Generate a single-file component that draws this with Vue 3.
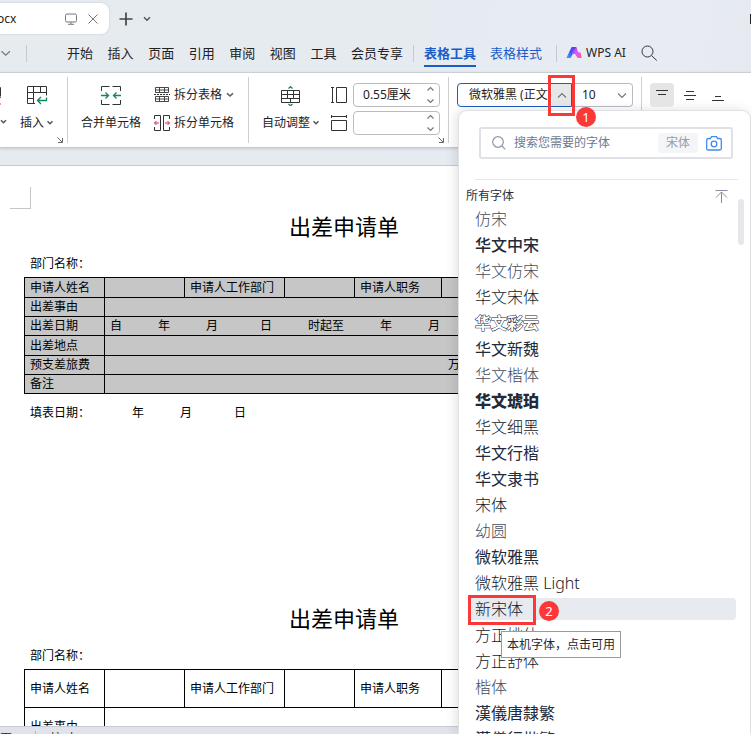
<script setup>
import { ref } from 'vue'

const menus = ['开始', '插入', '页面', '引用', '审阅', '视图', '工具', '会员专享']
const search = ref('')
const fontName = ref('微软雅黑 (正文)')
const fontSize = ref('10')
const rowHeight = ref('0.55厘米')
const colWidth = ref('')
const selected = ref('新宋体')

const fonts = [
  { name: '仿宋', look: 'thin' },
  { name: '华文中宋', look: 'medium' },
  { name: '华文仿宋', look: 'thin' },
  { name: '华文宋体', look: 'light' },
  { name: '华文彩云', look: 'outline' },
  { name: '华文新魏', look: 'brush' },
  { name: '华文楷体', look: 'thin' },
  { name: '华文琥珀', look: 'heavy' },
  { name: '华文细黑', look: 'light' },
  { name: '华文行楷', look: 'brush' },
  { name: '华文隶书', look: 'brush' },
  { name: '宋体', look: 'light' },
  { name: '幼圆', look: 'thin' },
  { name: '微软雅黑', look: 'regular' },
  { name: '微软雅黑 Light', look: 'light' },
  { name: '新宋体', look: 'light' },
  { name: '方正姚体', look: 'light' },
  { name: '方正舒体', look: 'light' },
  { name: '楷体', look: 'thin' },
  { name: '漢儀唐隸繁', look: 'brush' },
  { name: '漢儀行楷繁', look: 'brush' }
]
</script>

<template>
  <div class="app">
    <header class="titlebar">
      <div class="doc-tab">
        <span class="doc-name">ocx</span>
        <svg class="tab-icon" width="12" height="12" viewBox="0 0 12 12"><rect x="0.5" y="1" width="11" height="8" rx="1.5" /><path d="M6 9v2M3 11.3h6" /></svg>
        <button class="plain" aria-label="关闭">
          <svg class="tab-icon" width="10" height="12" viewBox="0 0 10 12"><path d="M0.5 1.5l9 9M9.5 1.5l-9 9" /></svg>
        </button>
      </div>
      <button class="plain" aria-label="新建"><svg class="plus" width="14" height="14" viewBox="0 0 14 14"><path d="M7 0.5v13M0.5 7h13" /></svg></button>
      <button class="plain" aria-label="标签列表"><svg class="chev bold" width="8" height="6" viewBox="0 0 8 6"><path d="M1 1.2l3 3 3-3" /></svg></button>
      <span class="window-edge"></span>
    </header>

    <nav class="menubar">
      <button class="plain first" aria-label="更多"><svg class="chev" width="11" height="7" viewBox="0 0 11 7"><path d="M1.5 1.2l4.2 4 4.2-4" /></svg></button>
      <i class="bar"></i>
      <div class="menus">
        <a v-for="m in menus" :key="m" href="#">{{ m }}</a>
      </div>
      <i class="bar"></i>
      <a href="#" class="active">表格工具</a>
      <a href="#" class="blue">表格样式</a>
      <i class="bar"></i>
      <a href="#" class="ai">
        <svg width="16" height="14" viewBox="0 0 16 14">
          <defs>
            <linearGradient id="aiLeft" x1="0" y1="1" x2="1" y2="0"><stop offset="0" stop-color="#3aa8ff" /><stop offset="0.5" stop-color="#3d55f5" /><stop offset="1" stop-color="#6a35f0" /></linearGradient>
            <linearGradient id="aiRight" x1="0" y1="0" x2="1" y2="1"><stop offset="0" stop-color="#7a3cf2" /><stop offset="0.5" stop-color="#e05af0" /><stop offset="1" stop-color="#ff5a8a" /></linearGradient>
          </defs>
          <path d="M5.6 1h4.8L4.6 12H0.4z" fill="url(#aiLeft)" />
          <path d="M7 5l3.400-4 1.400 4.200q0.500 1.300 1.600 1.300h1.200l1 5.500h-3.800L9.800 9.200q-0.600-1.400-1.800-1.200l-2.400 0.200z" fill="url(#aiRight)" />
        </svg>
        WPS AI
      </a>
      <button class="plain" aria-label="搜索"><svg class="line" width="17" height="17" viewBox="0 0 17 17"><circle cx="6.5" cy="6.5" r="5.5" /><path d="M10.6 10.6l5.2 5" /></svg></button>
    </nav>

    <section class="ribbon">
      <div class="group g-insert">
        <button class="tool cut" aria-label="删除">
          <svg width="6" height="20" viewBox="0 0 6 20"><path d="M-1 1.5h1.5v9" stroke="#333" fill="none" /><path d="M0 11.5h1M0 18h1" stroke="#d23b5d" /></svg>
          <svg class="chev bold" width="7" height="6" viewBox="0 0 7 6"><path d="M1 1.2l2.5 2.5L6 1.2" /></svg>
        </button>
        <button class="tool">
          <svg class="line" width="22" height="20" viewBox="0 0 22 20"><path d="M9 17.500H1.500V0.500h19v9M1.500 6.500h19M1.500 12.500h6M7.500 0.500v17M14.500 0.500v6" /><path class="green" d="M20.500 11.500V14.500H11.500M15 11l-3.500 3.500L15 18" /></svg>
          <span class="cap">插入<svg class="chev bold" width="8" height="6" viewBox="0 0 8 6"><path d="M1.500 1.200L4 3.700l2.500-2.500" /></svg></span>
        </button>
        <svg class="corner" width="6" height="6" viewBox="0 0 6 6"><path d="M0.500 0.500l4.500 4.500M5.500 1v4.500H1" /></svg>
      </div>

      <div class="group g-merge">
        <button class="tool">
          <svg class="line" width="22" height="20" viewBox="0 0 22 20"><path d="M1.500 5V0.500H9.500M1.500 14v4.500H9.500M20.500 5V0.500H12.500M20.500 14v4.500H12.500" /><path class="green" d="M1 9.500h7.500M5.500 6.500l3 3-3 3M21 9.500h-7.500M16.500 6.500l-3 3 3 3" /></svg>
          <span class="cap">合并单元格</span>
        </button>
        <div class="rows">
          <button class="row-tool">
            <svg class="line" width="16" height="16" viewBox="0 0 16 16"><path d="M1.500 5.500V0.500h13V5.500zM5.500 0.500V5.500M10.500 0.500V5.500M1.500 3h13M1.500 9.500V14.500h13V9.500zM5.500 9.500v5M10.500 9.500v5M1.500 12h13" stroke-width="0.900" /><path d="M0 7.500h16" stroke-dasharray="2 1" /></svg>
            拆分表格
            <svg class="chev bold" width="8" height="6" viewBox="0 0 8 6"><path d="M1 1.200l3 2.800 3-2.800" /></svg>
          </button>
          <button class="row-tool">
            <svg class="line" width="16" height="16" viewBox="0 0 16 16"><path d="M0.500 4V0.500h6v15h-6V12M15.500 4V0.500h-6v15h6V12" /><path class="red" d="M5 8H0.500M2.500 6l-2 2 2 2M11 8h4.500M13.500 6l2 2-2 2" /></svg>
            拆分单元格
          </button>
        </div>
      </div>

      <div class="group g-size">
        <button class="tool">
          <svg class="line" width="20" height="20" viewBox="0 0 20 20"><path d="M0.500 4.500h18v12h-18zM0.500 8.500h18M0.500 12.500h18M6.500 4.500v8M12.500 4.500v4M9.500 12.500v4M12.500 8.500v4" /><path class="green" d="M7.500 2.500L9.500 0.700l2 1.800M7.500 18l2 1.800 2-1.800" /></svg>
          <span class="cap">自动调整<svg class="chev bold" width="8" height="6" viewBox="0 0 8 6"><path d="M1.500 1.200L4 3.700l2.500-2.500" /></svg></span>
        </button>
        <div class="sizes">
          <label class="size">
            <svg class="line" width="16" height="16" viewBox="0 0 16 16"><path d="M0 0.500h3M1.500 0.500v15M0 15.500h3M5.500 0.500h10v15h-10z" /></svg>
            <span class="spin"><input v-model="rowHeight" aria-label="行高" /><svg class="chev" width="9" height="18" viewBox="0 0 9 18"><path d="M1.500 4.500l3-3 3 3M1.500 13.500l3 3 3-3" /></svg></span>
          </label>
          <label class="size">
            <svg class="line" width="16" height="16" viewBox="0 0 16 16"><path d="M0.500 0v3M0.500 1.500h15M15.500 0v3M0.500 5.500h15v10h-15z" /></svg>
            <span class="spin"><input v-model="colWidth" aria-label="列宽" /><svg class="chev" width="9" height="18" viewBox="0 0 9 18"><path d="M1.500 4.500l3-3 3 3M1.500 13.500l3 3 3-3" /></svg></span>
          </label>
        </div>
        <svg class="corner" width="6" height="6" viewBox="0 0 6 6"><path d="M0.500 0.500l4.500 4.500M5.500 1v4.500H1" /></svg>
      </div>

      <div class="group g-font">
        <div class="combo">
          <input v-model="fontName" aria-label="字体" />
          <button class="caret" aria-label="收起字体列表"><svg class="chev" width="10" height="7" viewBox="0 0 10 7"><path d="M1 5.500l4-4 4 4" /></svg></button>
          <span class="mark mark-one"></span>
          <span class="badge badge-one">1</span>

          <div class="panel">
            <label class="search">
              <svg width="14" height="14" viewBox="0 0 14 14"><circle cx="6" cy="6" r="5.300" /><path d="M10 10l3.300 3.300" /></svg>
              <input v-model="search" placeholder="搜索您需要的字体" aria-label="搜索字体" />
              <button class="tag">宋体</button>
              <button class="plain" aria-label="拍照识字"><svg class="camera" width="16" height="15" viewBox="0 0 16 15"><path d="M4.500 2.500L5.500 0.700h5l1 1.800h2.300q1.500 0 1.500 1.500v8.500q0 1.500-1.500 1.500H2.200q-1.500 0-1.500-1.500V4q0-1.500 1.500-1.500z" /><circle cx="8" cy="8" r="2.800" /></svg></button>
            </label>
            <div class="panel-head">
              <span>所有字体</span>
              <button class="plain" aria-label="回到顶部"><svg width="13" height="13" viewBox="0 0 13 13"><path d="M0.500 0.500h12M6.500 2v11M1 7.500l5.500-5.500L12 7.500" /></svg></button>
            </div>
            <ul class="fonts">
              <li v-for="f in fonts" :key="f.name" :class="{ on: f.name === selected }">
                <button :class="f.look" @click="selected = f.name">{{ f.name }}</button>
                <template v-if="f.name === selected">
                  <span class="mark mark-two"></span>
                  <span class="badge badge-two">2</span>
                  <span class="tip" role="tooltip">本机字体，点击可用</span>
                </template>
              </li>
            </ul>
            <span class="thumb"></span>
          </div>
        </div>
        <select v-model="fontSize" aria-label="字号"><option>10</option></select>
        <svg class="chev select-chev" width="10" height="7" viewBox="0 0 10 7"><path d="M1 1.500l4 4 4-4" /></svg>
      </div>

      <div class="group g-align">
        <button class="align on" aria-label="顶端对齐"><svg class="line" width="12" height="12" viewBox="0 0 12 12"><path d="M0 1.500h12M2 5.500h8" /></svg></button>
        <button class="align" aria-label="垂直居中"><svg class="line" width="12" height="12" viewBox="0 0 12 12"><path d="M2 2.500h8M0 6.500h12M2 10.500h8" /></svg></button>
        <button class="align" aria-label="底端对齐"><svg class="line" width="12" height="12" viewBox="0 0 12 12"><path d="M3 7.500h6M0 11.500h12" /></svg></button>
      </div>
    </section>

    <main class="doc">
      <div class="page">
        <div class="crop"></div>
        <h1>出差申请单</h1>
        <p>部门名称：</p>
        <table class="shaded">
          <colgroup><col class="c80" /><col class="c80" /><col class="c100" /><col class="c70" /><col class="c87" /><col /></colgroup>
          <tbody>
            <tr class="tall"><td>申请人姓名</td><td></td><td>申请人工作部门</td><td></td><td>申请人职务</td><td></td></tr>
            <tr><td>出差事由</td><td colspan="5"></td></tr>
            <tr><td>出差日期</td><td colspan="5"><div class="dates"><span>自</span><span>年</span><span>月</span><span>日</span><span>时起至</span><span>年</span><span>月</span></div></td></tr>
            <tr class="tall"><td>出差地点</td><td colspan="5"></td></tr>
            <tr><td>预支差旅费</td><td colspan="5" class="money">万</td></tr>
            <tr><td>备注</td><td colspan="5"></td></tr>
          </tbody>
        </table>
        <p class="fill"><span>填表日期：</span><span>年</span><span>月</span><span>日</span></p>
        <h1>出差申请单</h1>
        <p>部门名称：</p>
        <table class="roomy">
          <colgroup><col class="c80" /><col class="c80" /><col class="c100" /><col class="c70" /><col class="c87" /><col /></colgroup>
          <tbody>
            <tr><td>申请人姓名</td><td></td><td>申请人工作部门</td><td></td><td>申请人职务</td><td></td></tr>
            <tr><td>出差事由</td><td colspan="5"></td></tr>
          </tbody>
        </table>
      </div>
    </main>
    <footer class="status"><span>页</span><i></i><span>校对</span></footer>
  </div>
</template>

<style>
body { margin: 0; overflow: hidden; }
</style>

<style scoped>
* { box-sizing: border-box; }
.app {
  height: 100vh;
  display: flex;
  flex-direction: column;
  overflow: hidden;
  background: linear-gradient(100deg, #e6ebf0, #e6ebf1 50%, #e8ebf3 75%, #e4e9ed);
  color: #222;
  font: 12px/18px "Noto Sans", "Noto Sans CJK SC", sans-serif;
}
button, input, select { font: inherit; color: inherit; border: 0; background: none; padding: 0; margin: 0; outline: 0; }
svg { display: block; flex: none; }
a { color: inherit; text-decoration: none; }
.plain { display: flex; }
.line, .chev, .corner, .plus, .tab-icon { fill: none; stroke: #333; }
.chev { stroke: #777; stroke-width: 1.2; }
.chev.bold { stroke: #555; stroke-width: 1.5; }
.corner { stroke: #666; }
.green { stroke: #14875c; stroke-width: 1.3; }
.red { stroke: #d2284f; }

.titlebar { height: 37px; flex: none; display: flex; align-items: center; gap: 10px; position: relative; }
.doc-tab {
  width: 109px; height: 31px; background: #fff; border-radius: 0 8px 8px 0;
  display: flex; align-items: center; gap: 11px; box-shadow: 0 0 2px #b9c0c8;
}
.doc-name { flex: 1; margin-left: -3px; font-size: 12px; }
.tab-icon { stroke: #777; }
.doc-tab .plain { margin-right: 11px; }
.plus { stroke-width: 1.7; stroke: #444; }
.window-edge { position: absolute; right: 0; top: 14px; width: 1px; height: 10px; background: #222; }

.menubar { height: 35px; padding-bottom: 3px; flex: none; display: flex; align-items: center; font-size: 13px; white-space: nowrap; }
.menubar .first { width: 26px; }
.bar { width: 1px; height: 17px; background: #c6cad0; flex: none; }
.menus { display: flex; justify-content: space-between; width: 336px; margin: 0 10px 0 40px; }
.active { color: #1c5cc8; font-weight: 700; margin: 5px 14px 0 10px; height: 23px; line-height: 18px; border-bottom: 2px solid #1c5cc8; }
.blue { color: #1c5cc8; margin-right: 14px; }
.ai { display: flex; align-items: center; gap: 4px; margin: 0 15px 0 9px; font-size: 12px; }

.ribbon {
  height: 76px; flex: none; display: flex; background: #fff; position: relative; z-index: 2;
  border-top: 1px solid #c9ced3; border-bottom: 1px solid #c4c9ce; box-shadow: 0 1px 3px #c8ced4; padding: 4px 0;
}
.group { display: flex; border-right: 1px solid #cfcfcf; position: relative; padding-top: 6px; flex: none; white-space: nowrap; }
.g-align { border-right: 0; }
.tool { display: flex; flex-direction: column; align-items: center; gap: 8px; padding-top: 3px; height: 52px; }
.cap { display: flex; align-items: center; gap: 2px; height: 18px; }
.corner { position: absolute; right: 4px; bottom: 0; }
.g-insert { width: 68px; }
.cut { width: 7px; gap: 13px; align-items: flex-start; margin-right: 13px; }
.g-merge { width: 181px; padding-left: 13px; gap: 13px; }
.rows { display: flex; flex-direction: column; gap: 10px; padding-top: 3px; }
.row-tool { display: flex; align-items: center; gap: 4px; height: 18px; }
.g-size { width: 200px; padding-left: 13px; gap: 11px; }
.sizes { display: flex; flex-direction: column; gap: 4px; }
.size { display: flex; align-items: center; gap: 6px; }
.spin { display: flex; align-items: center; width: 87px; height: 24px; border: 1px solid #b9bdc3; border-radius: 4px; padding: 0 4px 0 9px; }
.spin input { flex: 1; min-width: 0; width: 0; }
.g-font { width: 193px; padding-left: 8px; }
.combo { position: relative; width: 115px; height: 24px; display: flex; border: 1px solid #1c5cc8; border-radius: 4px 0 0 4px; }
.combo > input { flex: 1; min-width: 0; width: 0; padding-left: 11px; }
.caret { width: 19px; background: #e6e7e9; display: flex; align-items: center; justify-content: center; }
select { appearance: none; width: 61px; height: 24px; padding-left: 10px; border: 1px solid #b9bdc3; border-left: 0; border-radius: 0 4px 4px 0; }
.select-chev { position: absolute; right: 14px; top: 15px; pointer-events: none; }
.g-align { padding-left: 8px; gap: 4px; }
.align { width: 24px; height: 24px; border-radius: 4px; display: flex; align-items: center; justify-content: center; }
.align.on { background: #e5e5e6; }

.mark { position: absolute; border: 3px solid #fb3838; pointer-events: none; z-index: 3; }
.mark-one { left: 90px; top: -9px; width: 27px; height: 41px; }
.mark-two { left: 0; top: -3px; width: 68px; height: 30px; }
.badge {
  position: absolute; z-index: 3; width: 20px; height: 20px; border-radius: 50%; background: #fb3838; color: #fff;
  text-align: center; line-height: 20px; font-size: 13px;
}
.badge-one { left: 118px; top: 23px; }
.badge-two { left: 71px; top: 3px; }

.panel {
  position: absolute; left: 0; top: 26px; width: 293px; height: calc(100vh - 110px); overflow: hidden;
  background: #fff; border: 1px solid #dfe1e4; border-bottom: 0; border-radius: 9px 9px 0 0; box-shadow: -2px 0 12px #0000001f;
}
.search {
  display: flex; align-items: center; height: 32px; margin: 16px 17px 20px 20px; padding: 0 9px 0 11px;
  border: 2px solid #dfe1e7; border-radius: 3px;
}
.search svg { fill: none; stroke: #8d96aa; stroke-width: 1.2; }
.search input { flex: 1; min-width: 0; width: 0; padding-left: 8px; }
.search input::placeholder { color: #6f788f; opacity: 1; }
.tag { width: 40px; height: 20px; background: #f3f5f7; color: #949cae; margin-right: 8px; border-radius: 2px; }
.search .camera { stroke: #3f8cf0; stroke-width: 1.3; }
.panel-head { display: flex; justify-content: space-between; align-items: center; padding: 7px 22px 2px 7px; color: #2a3042; height: 29px; position: relative; }
.panel-head::before { content: ""; position: absolute; left: 16px; right: 12px; top: 0; border-top: 1px solid #e6e8eb; }
.panel-head svg { fill: none; stroke: #868ea2; }
.fonts { list-style: none; margin: 0 14px 0 9px; padding: 0; display: flex; flex-direction: column; gap: 4px; font-size: 16px; color: #222a3b; }
.fonts li { position: relative; height: 22px; border-radius: 4px; }
.fonts li.on { background: #e7eaef; z-index: 2; }
.fonts button { display: block; width: 100%; height: 22px; line-height: 22px; padding-left: 7px; text-align: left; }
.fonts .thin { font-weight: 300; color: #444c5c; }
.fonts .light { font-weight: 300; color: #10182a; }
.fonts .medium { font-weight: 500; }
.fonts .brush { font-weight: 400; line-height: 20px; }
.fonts .heavy { font-weight: 900; }
.fonts .outline { font-weight: 700; color: #fff; -webkit-text-stroke: 1px #10182a; paint-order: stroke fill; }
.tip {
  position: absolute; left: 33px; top: 33px; height: 27px; padding: 0 5px; line-height: 25px; font-size: 12px;
  background: #fff; border: 1px solid #9a9a9a; white-space: nowrap;
}
.thumb { position: absolute; right: 6px; top: 88px; width: 6px; height: 46px; border-radius: 3px; background: #e5e7ea; }

.doc { flex: 1; min-height: 0; overflow: hidden; margin-top: 17px; background: #fff; border-top: 1px solid #c6c9cd; color: #000; }
.page { width: 100%; max-width: 688px; padding: 21px 24px 0; }
.crop { width: 21px; height: 22px; margin-left: -14px; border: solid #c6c6c6; border-width: 0 1px 1px 0; }
h1 { margin: 2px 0 13px; font-size: 22px; line-height: 30px; font-weight: 400; text-align: center; }
.page p { margin: 0; padding-left: 6px; height: 20px; line-height: 20px; }
table { width: 100%; margin-top: 3px; table-layout: fixed; border-collapse: collapse; }
td { border: 1px solid #000; padding: 0 5px; height: 19px; line-height: 16px; white-space: nowrap; }
.tall td { height: 20px; }
.shaded { background: #c6c6c6; }
.roomy td { height: 38px; }
.c80 { width: 80px; }
.c100 { width: 100px; }
.c70 { width: 70px; }
.c87 { width: 87px; }
.dates { display: grid; grid-template-columns: 48px 48px 54px 48px 72px 48px 48px; }
.money { padding-left: 343px; }
.page .fill { margin: 9px 0 180px; display: grid; grid-template-columns: 102px 48px 54px 20px; }

.status { height: 8px; flex: none; overflow: hidden; display: flex; background: #e0e3eb; border-top: 1px solid #c8ccd2; font-size: 12px; line-height: 24px; }
.status i { width: 1px; height: 8px; margin: 4px 14px 0 23px; background: #b5b9c1; }
</style>
